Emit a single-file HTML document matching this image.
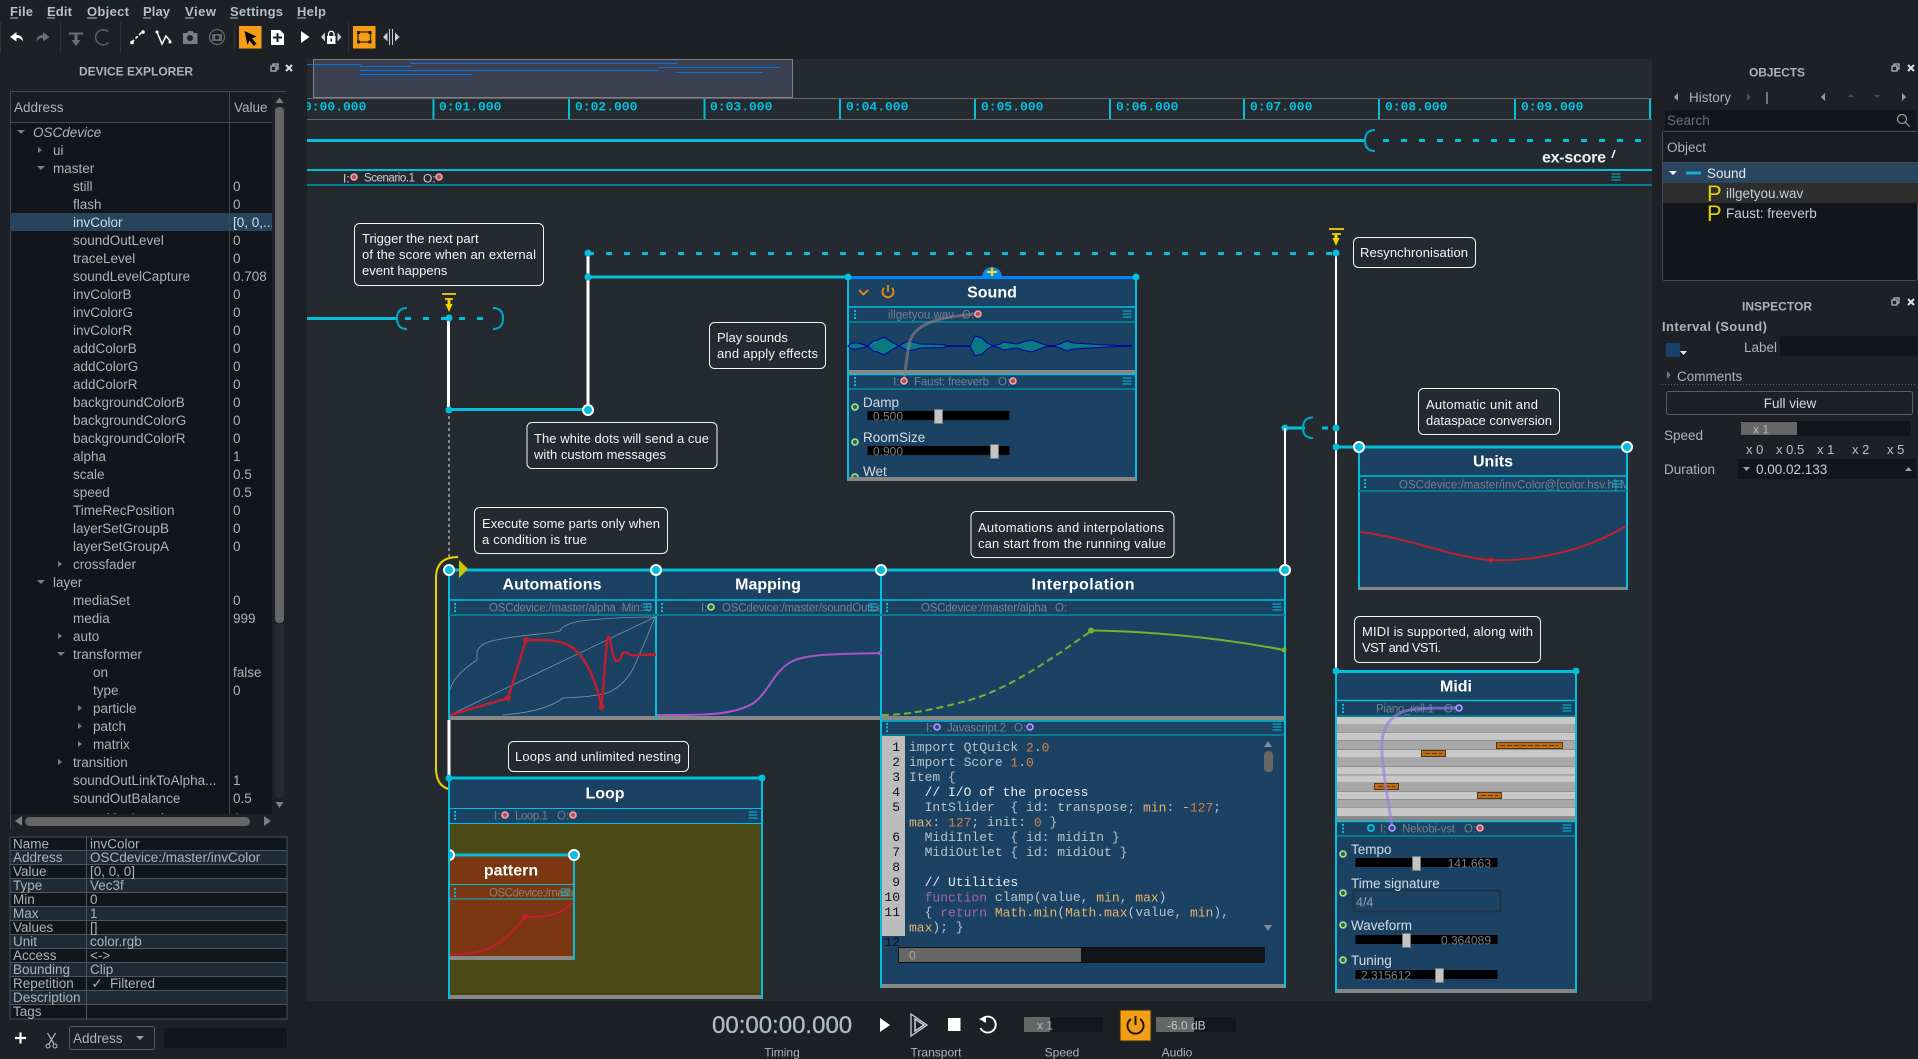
<!DOCTYPE html>
<html><head><meta charset="utf-8"><title>ossia score</title>
<style>
html,body{margin:0;padding:0;background:#1d2125;width:1918px;height:1059px;overflow:hidden}
svg{display:block;position:absolute;left:0;top:0}
text{dominant-baseline:central;font-family:"Liberation Sans",sans-serif;white-space:pre;transform:translateY(.7px)}
.mm{font-size:13px;font-weight:bold;fill:#b4bec6}
.pt{font-size:12px;font-weight:bold;fill:#aab4bc}
.t{font-size:13.5px;fill:#a9b4bc}
.r{font-family:"Liberation Mono",monospace;font-size:13px;font-weight:bold;fill:#03bfdb}
.b{font-size:13px;fill:#f2f4f5}
.h{font-size:11.5px;fill:#6f828f}
.ti{font-size:16px;font-weight:bold;fill:#fff;text-anchor:middle}
.pl{font-size:13.5px;fill:#d5dde2}
.sv{font-size:12px;fill:#7a7f80}
.c{font-family:"Liberation Mono",monospace;font-size:13px;fill:#b7c3cb}
.n{fill:#d87f42}.k{fill:#e6b56c}.f{fill:#a56a9c}.w{fill:#e6ecf0}
.ln{font-family:"Liberation Mono",monospace;font-size:13px;fill:#111;text-anchor:end}
.tr{font-size:12px;fill:#a9b4bc;text-anchor:middle}
</style></head><body>
<svg width="1918" height="1059" viewBox="0 0 1918 1059" xmlns="http://www.w3.org/2000/svg">
<defs>
<g id="ham" stroke="#03bfdb" stroke-width="1" fill="none"><path d="M-4.5-3.5h9M-4.5-.5h9M-4.5 2.5h9"/></g>
<g id="dots" fill="#03bfdb"><rect x="-1" y="-5" width="2" height="2"/><rect x="-1" y="-1.500" width="2" height="2"/><rect x="-1" y="2" width="2" height="2"/></g>
<circle id="pp" r="3" fill="#b54a5c" stroke="#f4a8a8" stroke-width="1.600"/>
<circle id="gp" r="3" fill="#2c6a48" stroke="#a6e892" stroke-width="1.600"/>
<circle id="up" r="3" fill="#3c3c9c" stroke="#a8a4f4" stroke-width="1.600"/>
<circle id="node" r="3.500" fill="#03bfdb"/>
<circle id="wn" r="5" fill="#03bfdb" stroke="#fff" stroke-width="2"/>
<g id="win"><rect x="-2" y="-4" width="5" height="5" fill="none" stroke="#b9c2c8" stroke-width="1.200"/><rect x="-4" y="-2" width="5" height="5" fill="#1d2125" stroke="#b9c2c8" stroke-width="1.200"/></g>
<path id="x" d="M-3-3L3 3M3-3L-3 3" stroke="#d8dfe3" stroke-width="2" fill="none"/>
<clipPath id="cv"><rect x="307" y="59" width="1345" height="942"/></clipPath>
<clipPath id="tc"><rect x="10" y="123" width="262" height="691"/></clipPath>
<clipPath id="pc"><rect x="451" y="885" width="122" height="14"/></clipPath>
<clipPath id="ac"><rect x="450" y="601" width="205" height="14"/></clipPath>
<clipPath id="mc"><rect x="658" y="601" width="222" height="14"/></clipPath>
<clipPath id="uc"><rect x="1360" y="477" width="266" height="14"/></clipPath>
<clipPath id="hn"><rect x="450" y="845" width="20" height="20"/></clipPath>
</defs>

<rect width="1918" height="1059" fill="#1d2125"/>
<!-- menu -->
<text x="10" y="11" class="mm" textLength="23">File</text>
<text x="47" y="11" class="mm" textLength="25">Edit</text>
<text x="87" y="11" class="mm" textLength="42">Object</text>
<text x="143" y="11" class="mm" textLength="27">Play</text>
<text x="185" y="11" class="mm" textLength="31">View</text>
<text x="230" y="11" class="mm" textLength="53">Settings</text>
<text x="297" y="11" class="mm" textLength="29">Help</text>
<path d="M10 18h8M47 18h8M87 18h10M143 18h8M185 18h9M230 18h8M297 18h9" stroke="#b4bec6" stroke-width="1"/>

<!-- toolbar -->
<path d="M.5 22v31M60.500 22v31M120.500 22v31M234.500 22v31M348.500 22v31" stroke="#2e3338" stroke-width="1"/>
<path d="M10 37l6.500-5v3c4 0 6.500 2 6.500 6.500-2-3-3.500-3.500-6.500-3.500v3.500z" fill="#fff"/>
<path d="M49.500 37l-6.500-5v3c-4 0-6.500 2-6.500 6.500 2-3 3.500-3.500 6.500-3.500v3.500z" fill="#6a6f74"/>
<path d="M69 32.500h14v2H69zM74.500 34.500h3V40h3l-4.500 6-4.500-6h3z" fill="#6a6f74"/>
<path d="M108.500 32a7.500 7.500 0 1 0 0 10.500" fill="none" stroke="#5e6368" stroke-width="1.500"/>
<path d="M132 42l10-10" stroke="#fff" stroke-width="1.600" stroke-dasharray="3 2"/><circle cx="132" cy="42.500" r="1.800" fill="#fff"/><circle cx="143" cy="32" r="1.800" fill="#fff"/>
<path d="M157 32l5 12 4-8 5 6" fill="none" stroke="#fff" stroke-width="1.500"/><circle cx="157" cy="32" r="1.500" fill="#fff"/><circle cx="170" cy="42" r="1.500" fill="#fff"/>
<path d="M183 33h4l1.500-2h4l1.500 2h3.500v11H183z" fill="#7a7f84"/><circle cx="190" cy="38" r="3" fill="#1d2125"/>
<circle cx="217" cy="37" r="7.500" fill="none" stroke="#62676c" stroke-width="1.300"/><path d="M212 34h10v7h-10z" fill="#62676c"/><circle cx="217" cy="37.500" r="2" fill="#1d2125"/>
<rect x="239" y="26" width="22.500" height="22.500" fill="#f59e14"/>
<path d="M244.500 31l12 5.500-4.500 2 4.500 5-2.500 2.500-4.500-5.500-2 4.500z" fill="#000"/>
<path d="M271 30h9l4 4v11h-13z" fill="#fff"/><path d="M277.500 33v9M273 37.500h9" stroke="#1d2125" stroke-width="2"/>
<path d="M301 31l8.500 6-8.500 6z" fill="#fff"/>
<path d="M321 37l4-4.500v9zM341.500 37l-4-4.500v9z" fill="#c9d0d4"/><rect x="327" y="36" width="8.500" height="8" fill="#fff"/><path d="M328.500 36v-2a2.700 2.700 0 0 1 5.500 0v2" fill="none" stroke="#fff" stroke-width="1.300"/><rect x="330.500" y="38.500" width="1.500" height="3" fill="#1d2125"/>
<rect x="353" y="26" width="22.500" height="22.500" fill="#f59e14"/>
<rect x="358" y="32" width="12.500" height="10" fill="none" stroke="#4d3400" stroke-width="1.500"/><path d="M357 31h3v3h-3zM368.500 31h3v3h-3zM357 40.500h3v3h-3zM368.500 40.500h3v3h-3z" fill="#1d1d00"/>
<path d="M383 37l4.500-4.500v9zM399.500 37l-4.500-4.500v9z" fill="#c9d0d4"/><path d="M389.500 29v16M392.500 29v16" stroke="#c9d0d4" stroke-width="1"/>

<!-- device explorer -->
<text x="136" y="71" class="pt" text-anchor="middle" textLength="114">DEVICE EXPLORER</text>
<use href="#win" x="275" y="68"/><use href="#x" x="289" y="68"/>
<rect x="10" y="91" width="277" height="738" fill="#12161a"/>
<rect x="10" y="91" width="262" height="32" fill="#191d21"/>
<rect x="272" y="91" width="15" height="738" fill="#1d2125"/>
<rect x="10" y="814" width="277" height="15" fill="#1d2125"/>
<path d="M10.500 829V91.500h276M10 122.500h262M229.500 91v723" fill="none" stroke="#44494e"/>
<text x="14" y="107" class="t">Address</text><text x="234" y="107" class="t">Value</text>
<path d="M275.500 103l4-5.500 4 5.500z" fill="#7a7f84"/>
<rect x="275" y="107" width="9" height="516" rx="4" fill="#666"/>
<rect x="275" y="623" width="9" height="175" rx="4" fill="#262a2e"/>
<path d="M275.500 802l4 6 4-6z" fill="#7a7f84"/>
<rect x="10" y="213" width="262" height="18" fill="#28435c"/>
<path d="M229.500 213v18" stroke="#44494e"/>
<rect x="25" y="817" width="225" height="9" rx="4.500" fill="#666"/>
<path d="M15 821l7-5v10zM264 816l7 5-7 5z" fill="#7a7f84"/>
<g fill="#7a7f84">
<path d="M17 130h8l-4 4z"/><path d="M38 147l4 3-4 3z" /><path d="M37 166h8l-4 4z"/>
<path d="M58 561l4 3-4 3z"/><path d="M37 580h8l-4 4z"/><path d="M58 633l4 3-4 3z"/><path d="M57 652h8l-4 4z"/>
<path d="M78 705l4 3-4 3z"/><path d="M78 723l4 3-4 3z"/><path d="M78 741l4 3-4 3z"/><path d="M58 759l4 3-4 3z"/>
</g>
<g clip-path="url(#tc)">
<text x="33" y="132" class="t" font-style="italic">OSCdevice</text>
<text x="53" y="150" class="t">ui</text><text x="53" y="168" class="t">master</text>
<text x="73" y="186" class="t">still</text><text x="233" y="186" class="t">0</text>
<text x="73" y="204" class="t">flash</text><text x="233" y="204" class="t">0</text>
<text x="73" y="222" class="t" style="fill:#d5dde2">invColor</text><text x="233" y="222" class="t" style="fill:#d5dde2">[0, 0,...</text>
<text x="73" y="240" class="t">soundOutLevel</text><text x="233" y="240" class="t">0</text>
<text x="73" y="258" class="t">traceLevel</text><text x="233" y="258" class="t">0</text>
<text x="73" y="276" class="t">soundLevelCapture</text><text x="233" y="276" class="t">0.708</text>
<text x="73" y="294" class="t">invColorB</text><text x="233" y="294" class="t">0</text>
<text x="73" y="312" class="t">invColorG</text><text x="233" y="312" class="t">0</text>
<text x="73" y="330" class="t">invColorR</text><text x="233" y="330" class="t">0</text>
<text x="73" y="348" class="t">addColorB</text><text x="233" y="348" class="t">0</text>
<text x="73" y="366" class="t">addColorG</text><text x="233" y="366" class="t">0</text>
<text x="73" y="384" class="t">addColorR</text><text x="233" y="384" class="t">0</text>
<text x="73" y="402" class="t">backgroundColorB</text><text x="233" y="402" class="t">0</text>
<text x="73" y="420" class="t">backgroundColorG</text><text x="233" y="420" class="t">0</text>
<text x="73" y="438" class="t">backgroundColorR</text><text x="233" y="438" class="t">0</text>
<text x="73" y="456" class="t">alpha</text><text x="233" y="456" class="t">1</text>
<text x="73" y="474" class="t">scale</text><text x="233" y="474" class="t">0.5</text>
<text x="73" y="492" class="t">speed</text><text x="233" y="492" class="t">0.5</text>
<text x="73" y="510" class="t">TimeRecPosition</text><text x="233" y="510" class="t">0</text>
<text x="73" y="528" class="t">layerSetGroupB</text><text x="233" y="528" class="t">0</text>
<text x="73" y="546" class="t">layerSetGroupA</text><text x="233" y="546" class="t">0</text>
<text x="73" y="564" class="t">crossfader</text>
<text x="53" y="582" class="t">layer</text>
<text x="73" y="600" class="t">mediaSet</text><text x="233" y="600" class="t">0</text>
<text x="73" y="618" class="t">media</text><text x="233" y="618" class="t">999</text>
<text x="73" y="636" class="t">auto</text>
<text x="73" y="654" class="t">transformer</text>
<text x="93" y="672" class="t">on</text><text x="233" y="672" class="t">false</text>
<text x="93" y="690" class="t">type</text><text x="233" y="690" class="t">0</text>
<text x="93" y="708" class="t">particle</text><text x="93" y="726" class="t">patch</text><text x="93" y="744" class="t">matrix</text>
<text x="73" y="762" class="t">transition</text>
<text x="73" y="780" class="t">soundOutLinkToAlpha...</text><text x="233" y="780" class="t">1</text>
<text x="73" y="798" class="t">soundOutBalance</text><text x="233" y="798" class="t">0.5</text>
<text x="73" y="818" class="t">soundOutLevel</text><text x="233" y="818" class="t">1</text>
</g>

<!-- property table -->
<rect x="10" y="837" width="277" height="182" fill="#12161a"/>
<g fill="#1e2b36"><rect x="10" y="850" width="277" height="14"/><rect x="10" y="878" width="277" height="14"/><rect x="10" y="906" width="277" height="14"/><rect x="10" y="934" width="277" height="14"/><rect x="10" y="962" width="277" height="14"/><rect x="10" y="990" width="277" height="14"/></g>
<path d="M10 850.500h277M10 864.500h277M10 878.500h277M10 892.500h277M10 906.500h277M10 920.500h277M10 934.500h277M10 948.500h277M10 962.500h277M10 976.500h277M10 990.500h277M10 1004.500h277M86.500 837v182" stroke="#4a5761"/>
<rect x="10" y="837" width="277" height="182" fill="none" stroke="#3d5467"/>
<g>
<text x="13" y="843.500" class="t">Name</text><text x="90" y="843.500" class="t">invColor</text>
<text x="13" y="857" class="t">Address</text><text x="90" y="857" class="t">OSCdevice:/master/invColor</text>
<text x="13" y="871" class="t">Value</text><text x="90" y="871" class="t">[0, 0, 0]</text>
<text x="13" y="885" class="t">Type</text><text x="90" y="885" class="t">Vec3f</text>
<text x="13" y="899" class="t">Min</text><text x="90" y="899" class="t">0</text>
<text x="13" y="913" class="t">Max</text><text x="90" y="913" class="t">1</text>
<text x="13" y="927" class="t">Values</text><text x="90" y="927" class="t">[]</text>
<text x="13" y="941" class="t">Unit</text><text x="90" y="941" class="t">color.rgb</text>
<text x="13" y="955" class="t">Access</text><text x="90" y="955" class="t">&lt;-&gt;</text>
<text x="13" y="969" class="t">Bounding</text><text x="90" y="969" class="t">Clip</text>
<text x="13" y="983" class="t">Repetition</text><text x="97" y="983" class="t" text-anchor="middle">✓</text><text x="110" y="983" class="t">Filtered</text>
<text x="13" y="997" class="t">Description</text>
<text x="13" y="1011" class="t">Tags</text>
</g>
<path d="M15 1038h11M20.500 1032.500v11" stroke="#fff" stroke-width="2.200"/>
<path d="M47.500 1033l6.500 11M55.500 1033l-6.500 11" stroke="#b9c2c8" stroke-width="1.200" fill="none"/><circle cx="48" cy="1046" r="2" fill="none" stroke="#b9c2c8"/><circle cx="55" cy="1046" r="2" fill="none" stroke="#b9c2c8"/>
<rect x="69.500" y="1026.500" width="85" height="23" rx="2" fill="#1d2125" stroke="#5a5f64"/>
<text x="73" y="1038" class="t">Address</text><path d="M136 1036h8l-4 4z" fill="#9aa2a8"/>
<rect x="164" y="1028" width="123" height="20" rx="1" fill="#12161a"/>

<!-- canvas -->
<rect x="307" y="59" width="1345" height="942" fill="#252a31"/>
<g clip-path="url(#cv)">
<rect x="313.500" y="59.500" width="479" height="38" fill="#3b4152" stroke="#808080"/>
<g stroke="#0078e0" stroke-width="1">
<path d="M300 64.500h61M360 66.500h51M410 63.500h267M360 70.500h299M360 74.500h112M658 67.500h122M676 72.500h86"/>
</g>
<path d="M307 98.500h1345M307 119.500h1345" stroke="#666"/>
<g stroke="#03bfdb" stroke-width="2"><path d="M298 99v20M433.500 99v20M569 99v20M704.500 99v20M840 99v20M975 99v20M1110 99v20M1244 99v20M1379 99v20M1515 99v20M1650 99v20"/></g>
<text x="304" y="106.500" class="r">0:00.000</text><text x="439" y="106.500" class="r">0:01.000</text><text x="575" y="106.500" class="r">0:02.000</text><text x="710" y="106.500" class="r">0:03.000</text><text x="846" y="106.500" class="r">0:04.000</text><text x="981" y="106.500" class="r">0:05.000</text><text x="1116" y="106.500" class="r">0:06.000</text><text x="1250" y="106.500" class="r">0:07.000</text><text x="1385" y="106.500" class="r">0:08.000</text><text x="1521" y="106.500" class="r">0:09.000</text>

<path d="M307 140.500h1058" stroke="#03bfdb" stroke-width="3"/>
<path d="M1375 130Q1365 130 1365 140.500Q1365 151 1375 151" fill="none" stroke="#03a8c8" stroke-width="2"/>
<path d="M1383 140.500H1642" stroke="#03bfdb" stroke-width="3" stroke-dasharray="6 12"/>
<text x="1542" y="157.500" font-size="16" font-weight="bold" fill="#eef1f3" textLength="64">ex-score</text>
<path d="M1612 158l3-8" stroke="#fff" stroke-width="1.500"/>
<path d="M307 170h1345" stroke="#03bfdb" stroke-width="2"/>
<path d="M307 185h1345" stroke="#067b8f" stroke-width="2"/>
<text x="343" y="178" font-size="12" fill="#c8d0d6">I:</text><use href="#pp" x="354" y="177"/>
<text x="364" y="178" font-size="11.500" fill="#c8d0d6" textLength="51">Scenario.1</text>
<text x="423" y="178" font-size="12" fill="#c8d0d6">O:</text><use href="#pp" x="439" y="177"/>
<use href="#ham" x="1616" y="177.500"/>

<!-- upper cue area -->
<path d="M307 318.500h90" stroke="#03bfdb" stroke-width="3"/>
<path d="M407 308Q397 308 397 318.500Q397 329 407 329" fill="none" stroke="#03a8c8" stroke-width="2"/>
<path d="M493 308Q503 308 503 318.500Q503 329 493 329" fill="none" stroke="#03a8c8" stroke-width="2"/>
<path d="M405 318.500H494" stroke="#03bfdb" stroke-width="3" stroke-dasharray="6 12"/>
<path d="M442 294h14M445 299h8" stroke="#f5d400" stroke-width="1.800"/><path d="M447.500 299h3v5h2l-3.500 8-3.500-8h2z" fill="#f5d400"/>
<path d="M448.500 318v92" stroke="#fff" stroke-width="3"/>
<use href="#node" x="449" y="318"/>
<path d="M449 410V560" stroke="#888" stroke-width="2" stroke-dasharray="3 3"/>
<path d="M449 409.500h139" stroke="#03bfdb" stroke-width="3"/>
<use href="#node" x="449" y="410"/>
<path d="M588 253v157" stroke="#fff" stroke-width="3"/>
<use href="#wn" x="588" y="410"/>
<path d="M588 253.500H1336" stroke="#03bfdb" stroke-width="3" stroke-dasharray="6 12"/>
<use href="#node" x="588" y="253"/>
<path d="M588 277h260" stroke="#03bfdb" stroke-width="3"/><use href="#node" x="588" y="277"/>

<!-- comment boxes -->
<g fill="#252a31" stroke="#f2f4f5" stroke-width="1">
<rect x="354.500" y="223.500" width="189" height="62" rx="5"/>
<rect x="709.500" y="322.500" width="116" height="46" rx="5"/>
<rect x="527" y="422.500" width="190" height="46" rx="5"/>
<rect x="474.500" y="507.500" width="193" height="46" rx="5"/>
<rect x="971" y="511.500" width="203" height="46" rx="5"/>
<rect x="1353.500" y="237.500" width="122" height="30" rx="5"/>
<rect x="1418.500" y="388.500" width="141" height="46" rx="5"/>
<rect x="508.500" y="741.500" width="180" height="30" rx="5"/>
<rect x="1354.500" y="616.500" width="186" height="46" rx="5"/>
</g>
<text x="362" y="238" class="b">Trigger the next part</text>
<text x="362" y="254" class="b" textLength="174">of the score when an external</text>
<text x="362" y="270" class="b">event happens</text>
<text x="717" y="337" class="b">Play sounds</text>
<text x="717" y="353" class="b" textLength="101">and apply effects</text>
<text x="534" y="438" class="b" textLength="175">The white dots will send a cue</text>
<text x="534" y="454" class="b" textLength="132">with custom messages</text>
<text x="482" y="523" class="b" textLength="178">Execute some parts only when</text>
<text x="482" y="539" class="b" textLength="105">a condition is true</text>
<text x="978" y="527" class="b" textLength="186">Automations and interpolations</text>
<text x="978" y="543" class="b" textLength="188">can start from the running value</text>
<text x="1360" y="252" class="b" textLength="108">Resynchronisation</text>
<text x="1426" y="404" class="b" textLength="112">Automatic unit and</text>
<text x="1426" y="420" class="b" textLength="126">dataspace conversion</text>
<text x="515" y="756" class="b" textLength="166">Loops and unlimited nesting</text>
<text x="1362" y="631" class="b" textLength="171">MIDI is supported, along with</text>
<text x="1362" y="647" class="b" textLength="79">VST and VSTi.</text>

<!-- right cues -->
<path d="M1336 253v417" stroke="#fff" stroke-width="2"/>
<path d="M1329 229h15M1332 234h9" stroke="#f5d400" stroke-width="1.800"/><path d="M1334.500 234h3v4h2l-3.500 8-3.500-8h2z" fill="#f5d400"/>
<use href="#node" x="1336" y="253"/>
<path d="M1285 428h20" stroke="#03bfdb" stroke-width="3"/>
<path d="M1313 417.500Q1303 417.500 1303 428Q1303 438 1313 438" fill="none" stroke="#03a8c8" stroke-width="2"/>
<path d="M1322 428h14" stroke="#03bfdb" stroke-width="3" stroke-dasharray="6 6"/>
<use href="#node" x="1285" y="428"/><use href="#node" x="1336" y="428"/>
<path d="M1285 428v142" stroke="#fff" stroke-width="2"/>
<path d="M1336 447h23" stroke="#03bfdb" stroke-width="3"/><use href="#node" x="1336" y="447"/>

<!-- Sound process -->
<rect x="848" y="277" width="288" height="203" fill="#1b4163"/>
<path d="M848 277v204M1136 277v204" stroke="#03bfdb" stroke-width="2"/>
<path d="M982 277a10 10 0 0 1 20 0z" fill="#0a86f0"/>
<path d="M987 272h10M992 267.500v9" stroke="#ffe600" stroke-width="2"/>
<path d="M848 277.500h288" stroke="#0086ff" stroke-width="3"/>
<use href="#node" x="848" y="277"/><use href="#node" x="1136" y="277"/>
<text x="992" y="292.500" class="ti">Sound</text>
<path d="M859 290l4.500 4.500 4.500-4.500" fill="none" stroke="#e8900c" stroke-width="1.800"/>
<path d="M884 288a5.500 5.500 0 1 0 8 0M888 285v7" fill="none" stroke="#e8900c" stroke-width="1.800"/>
<path d="M849 307h286" stroke="#03bfdb" stroke-width="1.500"/><path d="M849 322h286" stroke="#067b8f" stroke-width="2"/>
<use href="#dots" x="855" y="315"/><use href="#ham" x="1127" y="314.500"/>
<text x="888" y="315" class="h" textLength="66">illgetyou.wav</text><text x="962" y="315" class="h">O:</text>
<path d="M848 346h284" stroke="#00008b" stroke-width="1.500"/>
<path d="M848 346L852 343 857 343 865 345 868 346 873 341 878 340 884 337 890 341 897 345 899 346 908 341 917 343 920 344 943 344.500 948 346 970 346 975 336 982 338 987 343 993 346 1000 344 1003 342 1010 343 1017 344 1023 342 1032 340 1040 343 1045 345 1053 346 1060 344 1067 341 1073 343 1090 344 1107 345 1132 346 1107 347 1090 348 1073 349 1067 351 1060 348 1053 346 1045 347 1040 349 1032 352 1023 350 1017 348 1010 349 1003 350 1000 348 993 346 987 349 982 354 975 356 970 346 948 346 943 347.500 920 348 917 349 908 351 899 346 897 347 890 351 884 355 878 352 873 351 868 346 865 347 857 349 852 349z" fill="#0a7a80" stroke="#0000a8" stroke-width="1"/>
<rect x="849" y="370" width="286" height="4" fill="#888"/>
<path d="M849 374.500h286" stroke="#03bfdb" stroke-width="1.500"/><path d="M849 389h286" stroke="#067b8f" stroke-width="2"/>
<use href="#dots" x="855" y="382"/><use href="#ham" x="1127" y="381.500"/>
<text x="893" y="382" class="h">I:</text><text x="914" y="382" class="h" textLength="75">Faust: freeverb</text><text x="998" y="382" class="h">O:</text>
<use href="#pp" x="1013" y="381"/>
<path d="M978 314C945 316 912 322 909 345C906 360 906 368 904 381" fill="none" stroke="#9a7f8a" stroke-opacity=".6" stroke-width="3"/>
<use href="#pp" x="978" y="314"/><use href="#pp" x="904" y="381"/>
<use href="#gp" x="855" y="407"/><text x="863" y="402" class="pl">Damp</text>
<rect x="867.500" y="411" width="142" height="9" fill="#000" stroke="#223" stroke-width=".5"/><text x="873" y="416" class="sv">0.500</text><rect x="934.500" y="409.500" width="8" height="14" fill="#c4c4c4" stroke="#777"/>
<use href="#gp" x="855" y="442"/><text x="863" y="437" class="pl">RoomSize</text>
<rect x="867.500" y="446" width="142" height="9" fill="#000" stroke="#223" stroke-width=".5"/><text x="873" y="451" class="sv">0.900</text><rect x="990.500" y="444.500" width="8" height="14" fill="#c4c4c4" stroke="#777"/>
<text x="863" y="471" class="pl">Wet</text><path d="M852 477a3 3 0 0 1 6 0" fill="#2c6a48" stroke="#a6e892" stroke-width="1.600"/>
<rect x="848" y="477" width="288" height="4" fill="#888"/>

<!-- Triple row -->
<rect x="449" y="570" width="836" height="150" fill="#1b4163"/>
<rect x="449" y="716" width="836" height="4" fill="#888"/>
<path d="M449 570h836" stroke="#03bfdb" stroke-width="3"/>
<path d="M449 570v150M656 570v150M881 570v418M1285 570v418" stroke="#03bfdb" stroke-width="2" fill="none"/>
<path d="M449 600h836" stroke="#03bfdb" stroke-width="1.500"/><path d="M449 615h836" stroke="#067b8f" stroke-width="2"/>
<text x="552" y="584.500" class="ti" textLength="99">Automations</text><text x="768" y="584.500" class="ti">Mapping</text><text x="1083" y="584.500" class="ti" textLength="103">Interpolation</text>
<use href="#dots" x="455" y="608"/><use href="#dots" x="662" y="608"/><use href="#dots" x="887" y="608"/>
<g clip-path="url(#ac)"><text x="489" y="608" class="h" textLength="163">OSCdevice:/master/alpha  Min: 0</text></g>
<use href="#ham" x="647" y="607.500"/>
<text x="701" y="608" class="h">I:</text><use href="#gp" x="711" y="607"/>
<g clip-path="url(#mc)"><text x="722" y="608" class="h" textLength="175">OSCdevice:/master/soundOutLevel</text></g>
<use href="#ham" x="873" y="607.500"/>
<text x="921" y="608" class="h" textLength="126">OSCdevice:/master/alpha</text><text x="1055" y="608" class="h">O:</text>
<use href="#ham" x="1277" y="607.500"/>
<!-- automation curves -->
<path d="M450 715L655 617" fill="none" stroke="#7a93a8" stroke-width=".8"/>
<path d="M450 690C452 680 462 670 477 660L477 652C480 642 495 640 507 638C530 634 550 634 560 631C562 625 575 621 590 620C610 618 635 617 655 617" fill="none" stroke="#7a93a8" stroke-width=".8"/>
<path d="M502 715C530 713 550 708 563 698C580 697 590 697 607 693C620 688 630 678 637 660C645 642 650 630 655 617" fill="none" stroke="#7a93a8" stroke-width=".8"/>
<path d="M450 715L508 698L526 640C545 640 560 639 573 648C588 660 597 685 601.500 707L607 640Q609 632 611 645Q613 660 617 661Q620 661 622 654Q625 650 630 655Q633 655.500 653 654.500" fill="none" stroke="#c01f30" stroke-width="2.500"/>
<circle cx="508" cy="698" r="3" fill="#c01f30"/><circle cx="526" cy="640" r="3" fill="#c01f30"/><circle cx="601.500" cy="707" r="3" fill="#c01f30"/>
<circle cx="654" cy="654.500" r="2" fill="#c01f30"/>
<path d="M657 715C700 715 735 716 755 702C770 690 775 668 795 660C815 653 850 654 880 653" fill="none" stroke="#a855c8" stroke-width="2"/>
<circle cx="880" cy="653" r="2" fill="#a855c8"/>
<path d="M882 715C910 715 940 708 970 700C1010 688 1050 660 1091 631" fill="none" stroke="#77b032" stroke-width="2" stroke-dasharray="7 4"/>
<path d="M1091 630.500C1140 631 1210 636 1284 650" fill="none" stroke="#77b032" stroke-width="2"/>
<circle cx="1091" cy="630.500" r="3" fill="#77b032"/><circle cx="1284" cy="650" r="2.500" fill="#77b032"/>

<!-- JS -->
<rect x="882" y="720" width="402" height="268" fill="#1b4163"/>
<path d="M882 721h402" stroke="#03bfdb" stroke-width="1.500"/><path d="M882 735h402" stroke="#067b8f" stroke-width="2"/>
<use href="#dots" x="887" y="728"/><use href="#ham" x="1277" y="727.500"/>
<text x="926" y="728" class="h">I:</text><use href="#up" x="937" y="727"/><text x="947" y="728" class="h" textLength="59">Javascript.2</text><text x="1014" y="728" class="h">O:</text><use href="#up" x="1030" y="727"/>
<rect x="882" y="736" width="23" height="200" fill="#bcbcbc"/>
<text x="900" y="747" class="ln">1</text><text x="900" y="762" class="ln">2</text><text x="900" y="777" class="ln">3</text><text x="900" y="792" class="ln">4</text><text x="900" y="807" class="ln">5</text><text x="900" y="837" class="ln">6</text><text x="900" y="852" class="ln">7</text><text x="900" y="867" class="ln">8</text><text x="900" y="882" class="ln">9</text><text x="900" y="897" class="ln">10</text><text x="900" y="912" class="ln">11</text><text x="900" y="942" class="ln">12</text>
<text x="909" y="747" class="c">import QtQuick <tspan class="n">2</tspan>.<tspan class="n">0</tspan></text>
<text x="909" y="762" class="c">import Score <tspan class="n">1</tspan>.<tspan class="n">0</tspan></text>
<text x="909" y="777" class="c">Item {</text>
<text x="909" y="792" class="c w">  // I/O of the process</text>
<text x="909" y="807" class="c">  IntSlider  { id: transpose; <tspan class="k">min</tspan>: -<tspan class="n">127</tspan>;</text>
<text x="909" y="822" class="c"><tspan class="k">max</tspan>: <tspan class="n">127</tspan>; init: <tspan class="n">0</tspan> }</text>
<text x="909" y="837" class="c">  MidiInlet  { id: midiIn }</text>
<text x="909" y="852" class="c">  MidiOutlet { id: midiOut }</text>
<text x="909" y="882" class="c w">  // Utilities</text>
<text x="909" y="897" class="c">  <tspan class="f">function</tspan> clamp(value, <tspan class="k">min</tspan>, <tspan class="k">max</tspan>)</text>
<text x="909" y="912" class="c">  { <tspan class="f">return</tspan> <tspan class="k">Math</tspan>.<tspan class="k">min</tspan>(<tspan class="k">Math</tspan>.<tspan class="k">max</tspan>(value, <tspan class="k">min</tspan>),</text>
<text x="909" y="927" class="c"><tspan class="k">max</tspan>); }</text>
<path d="M1264 747l4-6 4 6zM1264 925l4 6 4-6z" fill="#7f8b95"/>
<rect x="1264" y="751" width="9" height="21" rx="4" fill="#666"/>
<rect x="898.500" y="947.500" width="366" height="15" rx="1" fill="#12161a" stroke="#111"/>
<rect x="899" y="948" width="182" height="14" fill="#666"/>
<text x="909" y="955" class="sv" style="fill:#a6a6a6">0</text>
<rect x="882" y="984" width="402" height="4" fill="#888"/>
<use href="#wn" x="449" y="570"/><use href="#wn" x="656" y="570"/><use href="#wn" x="881" y="570"/><use href="#wn" x="1285" y="570"/>

<!-- yellow condition -->
<path d="M458 557Q436 557 436 578V768Q436 790 456 790" fill="none" stroke="#e6d000" stroke-width="2"/>
<path d="M459 560l9 9-9 9z" fill="#c8c800"/>
<path d="M449 720v58" stroke="#fff" stroke-width="3"/>

<!-- Loop -->
<rect x="449" y="778" width="313" height="221" fill="#1b4163"/>
<rect x="450" y="824" width="311" height="172" fill="#4b4a16"/>
<rect x="449" y="995" width="313" height="4" fill="#888"/>
<path d="M449 778v221M762 778v221" stroke="#03bfdb" stroke-width="2"/>
<path d="M449 778h313" stroke="#03bfdb" stroke-width="3"/>
<path d="M449 808.500h313" stroke="#03bfdb" stroke-width="1"/><path d="M449 823.500h313" stroke="#03bfdb" stroke-width="1"/>
<use href="#node" x="449" y="778"/><use href="#node" x="762" y="778"/>
<text x="605" y="793.500" class="ti">Loop</text>
<use href="#dots" x="455" y="816"/><use href="#ham" x="753" y="815.500"/>
<text x="494" y="816" class="h">I:</text><use href="#pp" x="505" y="815"/><text x="515" y="816" class="h" textLength="33">Loop.1</text><text x="557" y="816" class="h">O:</text><use href="#pp" x="573" y="815"/>
<!-- pattern -->
<rect x="450" y="855" width="124" height="105" fill="#7a3711"/>
<rect x="450" y="956" width="124" height="4" fill="#888"/>
<path d="M574 855v105" stroke="#03bfdb" stroke-width="2"/>
<path d="M449 855h125" stroke="#03bfdb" stroke-width="3"/>
<path d="M450 884.500h124M450 899h124" stroke="#03bfdb" stroke-width="1"/>
<text x="511" y="870.500" class="ti">pattern</text>
<use href="#dots" x="455" y="893"/>
<g clip-path="url(#pc)"><text x="489" y="893" class="h" style="fill:#8a8070" textLength="120">OSCdevice:/master/alpha</text></g>
<use href="#ham" x="565" y="892.500"/>
<path d="M450 954C480 955 500 950 525 917C535 917 560 918 573 902" fill="none" stroke="#c01f30" stroke-width="2"/>
<circle cx="525" cy="917" r="3" fill="#c01f30"/>
<g clip-path="url(#hn)"><use href="#wn" x="449" y="855"/></g><use href="#wn" x="574" y="855"/>

<!-- Units -->
<rect x="1359" y="447" width="268" height="143" fill="#1b4163"/>
<path d="M1359 447v143M1627 447v143" stroke="#03bfdb" stroke-width="2"/>
<path d="M1359 447h268" stroke="#03bfdb" stroke-width="3"/>
<path d="M1359 476h268" stroke="#03bfdb" stroke-width="1.500"/><path d="M1359 491h268" stroke="#067b8f" stroke-width="2"/>
<text x="1493" y="461.500" class="ti">Units</text>
<use href="#dots" x="1365" y="484"/>
<g clip-path="url(#uc)"><text x="1399" y="485" class="h" textLength="240">OSCdevice:/master/invColor@[color.hsv.h] Min</text></g>
<use href="#ham" x="1617" y="484.500"/>
<path d="M1360 532C1410 538 1450 557 1491 560C1540 562 1590 548 1626 526" fill="none" stroke="#c01f30" stroke-width="2"/>
<circle cx="1491" cy="560" r="2.500" fill="#c01f30"/>
<rect x="1359" y="587" width="268" height="3" fill="#888"/>
<use href="#wn" x="1359" y="447"/><use href="#wn" x="1627" y="447"/>

<!-- Midi -->
<rect x="1336" y="671" width="240" height="322" fill="#1b4163"/>
<path d="M1336 671v322M1576 671v322" stroke="#03bfdb" stroke-width="2"/>
<path d="M1336 671.500h240" stroke="#03bfdb" stroke-width="3"/>
<path d="M1337 700.500h238" stroke="#03bfdb" stroke-width="1.500"/><path d="M1337 716h238" stroke="#067b8f" stroke-width="2"/>
<use href="#node" x="1336" y="671"/><use href="#node" x="1576" y="671"/>
<text x="1456" y="686.500" class="ti">Midi</text>
<use href="#dots" x="1343" y="709"/><use href="#ham" x="1567" y="708.500"/>
<text x="1376" y="709" class="h" textLength="58">Piano_roll.1</text><text x="1444" y="709" class="h">O:</text>
<g>
<rect x="1337" y="717" width="238" height="100" fill="#8f8f8f"/>
<g fill="#c8c8c8"><rect x="1337" y="717" width="238" height="7.500"/><rect x="1337" y="733" width="238" height="7"/><rect x="1337" y="750" width="238" height="7.500"/><rect x="1337" y="767" width="238" height="7.500"/><rect x="1337" y="775.500" width="238" height="7"/><rect x="1337" y="792" width="238" height="7"/><rect x="1337" y="808" width="238" height="8"/></g>
<g fill="#a8a8a8"><rect x="1337" y="725" width="238" height="7.500"/><rect x="1337" y="741" width="238" height="8"/><rect x="1337" y="758" width="238" height="8"/><rect x="1337" y="783" width="238" height="8"/><rect x="1337" y="800" width="238" height="7.500"/></g>
<g fill="#c46a10" stroke="#4d3a14"><rect x="1496.500" y="742.500" width="66" height="6"/><rect x="1421.500" y="750.500" width="24" height="6"/><rect x="1374.500" y="783.500" width="24" height="6"/><rect x="1477.500" y="792.500" width="24" height="6"/></g>
<path d="M1500 745.500h58M1425 753.500h17M1378 786.500h17M1481 795.500h17" stroke="#4d3a14" stroke-dasharray="5 2"/>
</g>
<rect x="1337" y="817" width="238" height="4" fill="#888"/>
<path d="M1337 821.500h238" stroke="#03bfdb" stroke-width="1.500"/><path d="M1337 836h238" stroke="#067b8f" stroke-width="2"/>
<path d="M1459 708C1430 708 1410 708 1400 713C1382 722 1381 740 1382 752C1383 775 1390 810 1392 828" fill="none" stroke="#9a80e0" stroke-opacity=".65" stroke-width="3"/>
<use href="#up" x="1459" y="708"/>
<use href="#dots" x="1343" y="829"/><use href="#ham" x="1567" y="828.500"/>
<circle cx="1371" cy="828" r="3" fill="none" stroke="#03bfdb" stroke-width="2"/>
<text x="1380" y="829" class="h">I:</text><use href="#up" x="1392" y="828"/><text x="1402" y="829" class="h" textLength="53">Nekobi-vst</text><text x="1464" y="829" class="h">O:</text><use href="#pp" x="1480" y="828"/>
<use href="#gp" x="1343" y="854"/><text x="1351" y="849" class="pl">Tempo</text>
<rect x="1355.500" y="858" width="142" height="9" fill="#000"/><text x="1491" y="863" class="sv" text-anchor="end">141.663</text><rect x="1412.500" y="856.500" width="8" height="14" fill="#c4c4c4" stroke="#777"/>
<use href="#gp" x="1343" y="893"/><rect x="1353.500" y="890.500" width="147" height="21" rx="1" fill="none" stroke="#223242" stroke-width="1.500"/><text x="1351" y="883" class="pl">Time signature</text>
<text x="1356" y="902" font-size="12.500" fill="#8fa0ad">4/4</text>
<use href="#gp" x="1343" y="925"/><text x="1351" y="925" class="pl">Waveform</text>
<rect x="1355.500" y="935" width="142" height="9" fill="#000"/><text x="1491" y="940" class="sv" text-anchor="end">0.364089</text><rect x="1402.500" y="933.500" width="8" height="14" fill="#c4c4c4" stroke="#777"/>
<use href="#gp" x="1343" y="960"/><text x="1351" y="960" class="pl">Tuning</text>
<rect x="1355.500" y="970" width="142" height="9" fill="#000"/><text x="1361" y="975" class="sv">2.315612</text><rect x="1435.500" y="968.500" width="8" height="14" fill="#c4c4c4" stroke="#777"/>
<rect x="1337" y="989" width="238" height="4" fill="#888"/>
</g>

<!-- right panel -->
<text x="1777" y="72" class="pt" text-anchor="middle" textLength="56">OBJECTS</text>
<use href="#win" x="1896" y="68"/><use href="#x" x="1911" y="68"/>
<path d="M1747 93v8l4-4z" fill="#4a4f54"/><path d="M1678 93v8l-4-4z" fill="#9aa2a8"/>
<text x="1689" y="97" class="t">History</text>
<path d="M1767 92v12" stroke="#9aa2a8" stroke-width="1.300"/>
<path d="M1825 93v8l-4-4z" fill="#9aa2a8"/><path d="M1848 97l3-3 3 3z" fill="#4a4f54"/><path d="M1874 95l3 3 3-3z" fill="#4a4f54"/><path d="M1902 93v8l4-4z" fill="#9aa2a8"/>
<rect x="1665" y="110" width="251" height="20" fill="#12161a"/>
<text x="1667" y="120" class="t" style="fill:#66707a">Search</text>
<circle cx="1902" cy="119" r="4.500" fill="none" stroke="#9aa2a8" stroke-width="1.200"/><path d="M1905.500 122.500l4 4" stroke="#9aa2a8" stroke-width="1.200"/>
<rect x="1662.500" y="131.500" width="255" height="149" rx="2" fill="#12161a" stroke="#44494e"/>
<rect x="1663" y="132" width="255" height="30" fill="#191d21"/>
<path d="M1663 162.500h255" stroke="#44494e"/>
<text x="1667" y="147" class="t">Object</text>
<rect x="1663" y="163" width="255" height="20" fill="#2a4560"/>
<rect x="1663" y="183" width="255" height="20" fill="#2e2e2e"/>
<path d="M1669 171h8l-4 4z" fill="#fff"/><rect x="1686" y="171.500" width="15" height="3" fill="#18a8d8"/>
<text x="1707" y="173" class="t" style="fill:#e2e8ec">Sound</text>
<text x="1707" y="193" font-size="22" fill="#e6d000">P</text>
<text x="1726" y="193" class="t" style="fill:#c8d0d6">illgetyou.wav</text>
<text x="1707" y="213" font-size="22" fill="#e6d000">P</text>
<text x="1726" y="213" class="t" style="fill:#c8d0d6">Faust: freeverb</text>

<text x="1777" y="306" class="pt" text-anchor="middle" textLength="70">INSPECTOR</text>
<use href="#win" x="1896" y="302"/><use href="#x" x="1911" y="302"/>
<text x="1662" y="326" class="pt" style="font-size:13px" textLength="105">Interval (Sound)</text>
<rect x="1666" y="343" width="14" height="14" fill="#18406a"/><path d="M1680 351h7l-3.500 4z" fill="#e0e6ea"/>
<text x="1744" y="347" class="t">Label</text>
<rect x="1780" y="336" width="138" height="20" fill="#12161a"/>
<path d="M1667 371v8l3.500-4z" fill="#7a7f84"/>
<text x="1677" y="376" class="t">Comments</text>
<path d="M1662 384.500h254" stroke="#5a5f64" stroke-dasharray="1 2"/>
<rect x="1666.500" y="391.500" width="246" height="23" rx="2" fill="#1d2125" stroke="#5a5f64"/>
<text x="1790" y="403" class="t" text-anchor="middle" style="fill:#d0d8dc">Full view</text>
<text x="1664" y="435" class="t">Speed</text>
<rect x="1741" y="421" width="170" height="15" fill="#12161a"/><rect x="1741" y="422" width="56" height="13" fill="#666"/>
<text x="1753" y="429" font-size="12" fill="#b0b6ba">x 1</text>
<text x="1746" y="449" font-size="13" fill="#b8c0c6">x 0</text><text x="1776" y="449" font-size="13" fill="#b8c0c6">x 0.5</text><text x="1817" y="449" font-size="13" fill="#b8c0c6">x 1</text><text x="1852" y="449" font-size="13" fill="#b8c0c6">x 2</text><text x="1887" y="449" font-size="13" fill="#b8c0c6">x 5</text>
<text x="1664" y="469" class="t">Duration</text>
<rect x="1738" y="459" width="178" height="20" rx="1" fill="#12161a"/>
<path d="M1743 467h7l-3.500 4z" fill="#9aa2a8"/><path d="M1905 471h7l-3.500-4z" fill="#9aa2a8"/>
<text x="1756" y="469" class="t" style="fill:#c8d0d6">0.00.02.133</text>

<!-- transport -->
<text x="712" y="1025" font-size="24" fill="#b0bcc6" stroke="#b0bcc6" stroke-width=".3">00:00:00.000</text>
<path d="M880 1018l10 7-10 7z" fill="#fff"/>
<path d="M911 1014l16 11-16 11z" fill="none" stroke="#c8d0d6" stroke-width="1.300"/><path d="M915 1019l9 6-9 6z" fill="none" stroke="#c8d0d6" stroke-width="1.500"/>
<rect x="948" y="1018" width="12.500" height="13" fill="#fff"/>
<path d="M982 1019a8 8 0 1 1-1.500 9" fill="none" stroke="#fff" stroke-width="1.900"/><path d="M979 1019l7-3v7z" fill="#fff"/>
<rect x="1024" y="1017" width="79" height="15" fill="#14181c"/><rect x="1024" y="1017" width="26" height="15" fill="#666"/>
<text x="1037" y="1025" font-size="12" fill="#b0b6ba">x 1</text>
<rect x="1120" y="1010" width="31" height="31" fill="#f59e14" stroke="#2a2a1a"/>
<path d="M1131 1019a8 8 0 1 0 9 0M1135.500 1016v9" fill="none" stroke="#1a1a08" stroke-width="2"/>
<rect x="1156" y="1017" width="80" height="15" fill="#14181c"/><rect x="1156" y="1017" width="38" height="15" fill="#666"/>
<text x="1167" y="1025" font-size="12" fill="#c0c6ca">-6.0 dB</text>
<text x="782" y="1052" class="tr">Timing</text><text x="936" y="1052" class="tr">Transport</text><text x="1062" y="1052" class="tr">Speed</text><text x="1177" y="1052" class="tr">Audio</text>
</svg>
</body></html>
